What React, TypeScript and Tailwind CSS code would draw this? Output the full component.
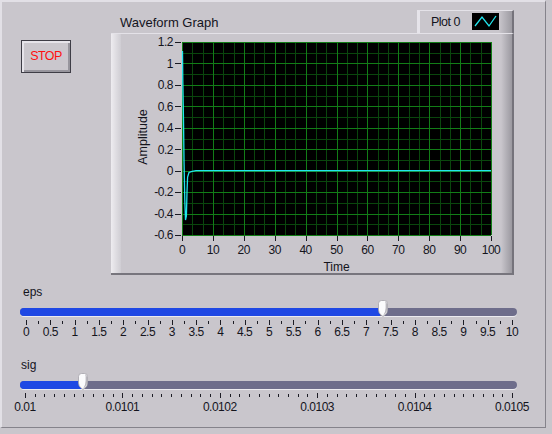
import React from 'react';

const num = "font-['Liberation_Sans',sans-serif] tracking-[-0.5px]";

// plot geometry inside the graph svg
const PX = 61;
const PY = 8;
const PW = 309;
const PH = 193;

const yLabels = ['1.2', '1', '0.8', '0.6', '0.4', '0.2', '0', '-0.2', '-0.4', '-0.6'];
const xLabels = ['0', '10', '20', '30', '40', '50', '60', '70', '80', '90', '100'];

const trace =
  'M61.5,17 L61.8,46 L62.5,86 L63,126 L63.8,166 L64.5,186 L65.4,182 L66,158 L66.6,143 L68,138.5 L71,137.3 L75,136.6 L370,136.6';

const WaveformPlot: React.FC = () => {
  const minorX = Array.from({ length: 31 }, (_, i) => PX + (PW / 30) * i);
  const minorY = Array.from({ length: 19 }, (_, i) => PY + (PH / 18) * i);
  const crisp = (v: number) => Math.round(v) + 0.5;

  return (
    <svg width="380" height="239" viewBox="0 0 380 239" className={num}>
      <rect x={PX} y={PY} width={PW} height={PH} fill="#000" />
      <g shapeRendering="crispEdges" strokeWidth="1">
        {minorX.map((x, i) =>
          i % 3 === 0 ? null : (
            <line key={'mx' + i} x1={crisp(x)} x2={crisp(x)} y1={PY} y2={PY + PH} stroke="#0a460d" />
          )
        )}
        {minorY.map((y, i) =>
          i % 2 === 0 ? null : (
            <line key={'my' + i} y1={crisp(y)} y2={crisp(y)} x1={PX} x2={PX + PW} stroke="#0a460d" />
          )
        )}
        {minorX.map((x, i) =>
          i % 3 !== 0 ? null : (
            <line key={'Mx' + i} x1={crisp(x)} x2={crisp(x)} y1={PY} y2={PY + PH} stroke="#127d17" />
          )
        )}
        {minorY.map((y, i) =>
          i % 2 !== 0 ? null : (
            <line key={'My' + i} y1={crisp(y)} y2={crisp(y)} x1={PX} x2={PX + PW} stroke="#127d17" />
          )
        )}
      </g>
      <path d={trace} fill="none" stroke="#22e6ee" strokeWidth="1.3" />

      {/* axis ticks */}
      <g shapeRendering="crispEdges">
        {yLabels.map((l, i) => {
          const y = PY + (PH / 9) * i;
          return <line key={'yt' + l} x1={54} x2={60} y1={crisp(y)} y2={crisp(y)} stroke="#1a1a22" />;
        })}
        {xLabels.map((l, i) => {
          const x = PX + (PW / 10) * i;
          return <line key={'xt' + l} x1={crisp(x)} x2={crisp(x)} y1={202} y2={207} stroke="#1a1a22" />;
        })}
      </g>
      <g fill="#14141c" fontSize="12">
        {yLabels.map((l, i) => (
          <text key={'yl' + l} x={52} y={PY + (PH / 9) * i + 4.3} textAnchor="end">
            {l}
          </text>
        ))}
        {xLabels.map((l, i) => (
          <text key={'xl' + l} x={PX + (PW / 10) * i} y={220} textAnchor="middle">
            {l}
          </text>
        ))}
      </g>
      <g fill="#14141c" fontSize="12.5" className="font-['Liberation_Sans',sans-serif] tracking-normal">
        <text x={26} y={103} textAnchor="middle" transform="rotate(-90 26 103)">
          Amplitude
        </text>
        <text x={215.5} y={237} textAnchor="middle" fontSize="12">
          Time
        </text>
      </g>
    </svg>
  );
};

const Thumb: React.FC = () => (
  <svg width="12" height="17" viewBox="0 0 12 17">
    <path
      d="M1.5 3.5 Q1.5 0.5 4.5 0.5 H7.5 Q10.5 0.5 10.5 3.5 V10 Q10.5 13 8 15 L6 16.5 L4 15 Q1.5 13 1.5 10 Z"
      fill="#fbfbfd"
      stroke="#a4a2aa"
      strokeWidth="0.8"
    />
    <path d="M8 1.2 Q10 1.8 10 4 V10 Q10 12.6 7.6 14.6 L6 16 Q8.6 12 8.6 8 V3 Z" fill="#b9b7be" />
  </svg>
);

const Track: React.FC<{ fill: number; thumb: number }> = ({ fill, thumb }) => (
  <div className="relative h-[16px] w-[497px] flex items-end">
    <div className="h-[8px] w-full rounded-full bg-[#6e6d8b] overflow-hidden flex shadow-[0_1px_0_#ecebf0]">
      <div className="h-full bg-[#1f48e4]" style={{ width: fill }} />
    </div>
    <div className="absolute top-0" style={{ left: thumb }}>
      <Thumb />
    </div>
  </div>
);

const Ticks: React.FC<{ start: number; step: number; count: number; every: number }> = ({
  start,
  step,
  count,
  every,
}) => (
  <svg width="498" height="7" viewBox="0 0 498 7" shapeRendering="crispEdges">
    {Array.from({ length: count }, (_, i) => {
      const x = Math.round(start + step * i) + 0.5;
      const major = i % every === 0;
      return <line key={i} x1={x} x2={x} y1={major ? 1.5 : 2.5} y2={major ? 7 : 5.5} stroke="#1c1c24" />;
    })}
  </svg>
);

const epsLabels = Array.from({ length: 21 }, (_, i) => String(i / 2));
const sigLabels = ['0.01', '0.0101', '0.0102', '0.0103', '0.0104', '0.0105'];

export default function App() {
  return (
    <div className="w-[552px] h-[434px] bg-[#c9c6cc] overflow-hidden text-[#14141c] font-['Liberation_Sans',sans-serif]">
      <div className="w-[546px] h-[428px] border-t-2 border-l-2 border-t-[#e2e0e6] border-l-[#e2e0e6] border-r border-b border-r-[#85838b] border-b-[#85838b] flex flex-col">
        {/* top row: stop button + graph */}
        <div className="flex items-start">
          <button className="ml-[19px] mt-[38px] w-[50px] h-[33px] border border-[#3e3d46] bg-[#cac7cd] shadow-[inset_2px_2px_0_#e6e4ea,inset_-2px_-2px_0_#97959d] text-[#ff1010] text-[12.5px] tracking-[-0.6px] leading-none">
            STOP
          </button>

          <div className="ml-[40px] mt-[8px] w-[403px] flex flex-col">
            <div className="h-[23px] flex justify-between items-start">
              <span className="pl-[9px] pt-[5px] text-[13px] leading-[15px]">Waveform Graph</span>
              <div className="w-[97px] h-[23px] flex border-t border-t-[#e4e2e8] border-l-[3px] border-l-[#e6e4ea] border-r-2 border-r-[#75737b]">
                <div className="pl-[11px] w-[52px] flex items-center">
                  <span className="text-[12.5px] tracking-[-0.5px] leading-none">Plot 0</span>
                </div>
                <div className="mt-[2px] w-[27px] h-[17px] bg-black">
                  <svg width="27" height="17" viewBox="0 0 27 17">
                    <path d="M3 13 L10 4 L17 13 L24 3" fill="none" stroke="#22e6ee" strokeWidth="1.3" />
                  </svg>
                </div>
                <div className="flex-1 bg-linear-to-r from-[#c9c6cc] to-[#9d9ba2]" />
              </div>
            </div>

            <div className="h-[242px] flex border-t border-t-[#e4e2e8] border-b-2 border-b-[#77757d] border-r-2 border-r-[#75737b]">
              <div className="w-[10px] bg-linear-to-r from-[#eeecf0] to-[#cfcdd3]" />
              <WaveformPlot />
              <div className="w-[11px] bg-linear-to-r from-[#c9c6cc] to-[#9b99a0]" />
            </div>
          </div>
        </div>

        {/* sliders */}
        <div className="pl-[18px] flex flex-col">
          <span className="mt-[10px] pl-[3px] text-[12px] leading-[15px]">eps</span>
          <Track fill={360} thumb={357} />
          <div className="mt-[2px]">
            <Ticks start={6} step={12.15} count={41} every={2} />
          </div>
          <div className={`ml-[6px] w-[486px] flex justify-between text-[12px] leading-[13px] mt-[1px] ${num}`}>
            {epsLabels.map((l) => (
              <div key={l} className="w-0 flex justify-center">
                <span className="whitespace-nowrap">{l}</span>
              </div>
            ))}
          </div>

          <span className="mt-[19px] pl-[1px] text-[12px] leading-[15px]">sig</span>
          <Track fill={62} thumb={57} />
          <div className="mt-[2px]">
            <Ticks start={5} step={9.74} count={51} every={10} />
          </div>
          <div className={`ml-[5px] w-[487px] flex justify-between text-[12px] leading-[13px] mt-[3px] ${num}`}>
            {sigLabels.map((l) => (
              <div key={l} className="w-0 flex justify-center">
                <span className="whitespace-nowrap">{l}</span>
              </div>
            ))}
          </div>
        </div>
      </div>
    </div>
  );
}
